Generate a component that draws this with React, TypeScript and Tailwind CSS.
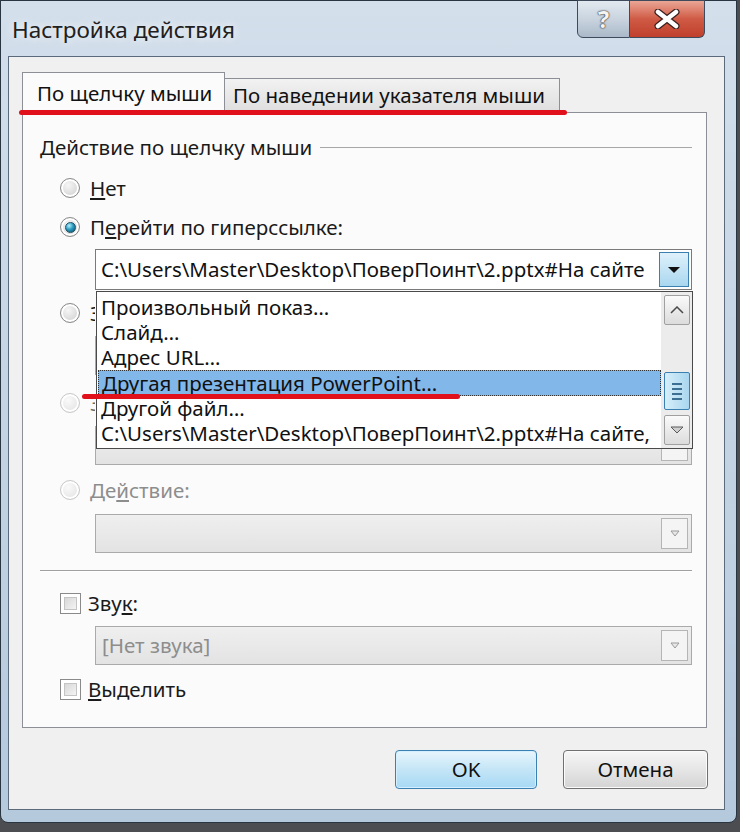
import React from 'react';

const font = { fontFamily: '"Noto Sans", "Open Sans", sans-serif' };

const Radio: React.FC<{ checked?: boolean; disabled?: boolean }> = ({ checked, disabled }) => (
  <span
    className={`w-[20px] h-[20px] shrink-0 rounded-full border flex items-center justify-center shadow-[inset_0_0_0_2px_#ffffff] ${
      disabled
        ? 'border-[#c9c9c9] bg-[radial-gradient(circle_at_40%_35%,#fafafa,#dedede)]'
        : 'border-[#8a8a8a] bg-[radial-gradient(circle_at_40%_35%,#f6f6f6,#c8c8c8)]'
    }`}
  >
    {checked && (
      <span className="w-[11px] h-[11px] rounded-full border border-[#1c4f66] bg-[radial-gradient(circle_at_35%_30%,#b7f0ff,#2a9bc0_45%,#0c4a63)]" />
    )}
  </span>
);

const Checkbox: React.FC = () => (
  <span className="w-[21px] h-[21px] shrink-0 border border-[#8a8a8a] bg-white p-[3px]">
    <span className="block w-full h-full bg-gradient-to-br from-[#d8d8d8] to-[#f4f4f4] border border-[#c4c4c4]" />
  </span>
);

const DisabledCombo: React.FC<{ text?: string }> = ({ text }) => (
  <div className="ml-[72px] w-[597px] h-[39px] border border-[#aaaaaa] bg-gradient-to-b from-[#efefef] to-[#e3e3e3] flex items-center justify-between pl-[6px] pr-[3px]">
    <span className="text-[20.5px] text-[#8d8d8d] whitespace-nowrap">{text}</span>
    <span className="w-[27px] h-[31px] border border-[#b5b5b5] bg-[#f4f4f4] flex items-center justify-center">
      <svg width="10" height="7" viewBox="0 0 10 7">
        <path d="M1 1 L9 1 L5 6 Z" fill="#e8e8e8" stroke="#9a9a9a" strokeWidth="1" />
      </svg>
    </span>
  </div>
);

const listItems = [
  'Произвольный показ…',
  'Слайд…',
  'Адрес URL…',
  'Другая презентация PowerPoint…',
  'Другой файл…',
  'C:\\Users\\Master\\Desktop\\ПоверПоинт\\2.pptx#На сайте,',
];

const ScrollBtn: React.FC<{ up?: boolean }> = ({ up }) => (
  <div className="h-[30px] w-[26px] mx-auto border border-[#a0a0a0] rounded-[2px] bg-gradient-to-b from-[#fafafa] to-[#dcdcdc] flex items-center justify-center">
    <svg width="14" height="8" viewBox="0 0 14 8">
      {up ? (
        <path d="M1 7 L7 1 L13 7" fill="none" stroke="#4a4a4a" strokeWidth="1.5" />
      ) : (
        <path d="M1 1 L13 1 L7 7 Z" fill="#cfcfcf" stroke="#5a5a5a" strokeWidth="1" />
      )}
    </svg>
  </div>
);

const DropList: React.FC = () => (
  <div className="absolute left-0 top-[41px] w-[597px] h-[158px] border border-[#4a4a4a] bg-white flex z-10">
    <div className="flex-1 overflow-hidden pt-[3px] pl-[1px]">
      {listItems.map((t, i) => (
        <div
          key={t}
          className={`h-[25px] flex items-center pl-[3px] whitespace-nowrap text-[20.5px] text-[#111] ${
            i === 3 ? 'bg-[#82b7ea] border border-dotted border-[#333] h-[26px]' : ''
          }`}
        >
          {t}
        </div>
      ))}
    </div>
    <div className="w-[31px] bg-[#ececec] flex flex-col pt-[3px]">
      <ScrollBtn up />
      <div className="h-[47px]" />
      <div className="h-[38px] w-[26px] mx-auto border border-[#3c7fb1] rounded-[2px] bg-gradient-to-r from-[#d6eefa] to-[#a9d6ef] flex flex-col items-center justify-center gap-[3px]">
        <span className="w-[10px] h-[2px] bg-[#3d6f93]" />
        <span className="w-[10px] h-[2px] bg-[#3d6f93]" />
        <span className="w-[10px] h-[2px] bg-[#3d6f93]" />
        <span className="w-[10px] h-[2px] bg-[#3d6f93]" />
      </div>
      <div className="h-[5px]" />
      <ScrollBtn />
    </div>
  </div>
);

const Row: React.FC<{ mt: string; children: React.ReactNode }> = ({ mt, children }) => (
  <div className={`${mt} h-[30px] pl-[37px] flex items-center gap-[10px]`}>{children}</div>
);

export default function App() {
  return (
    <div className="relative w-[740px] h-[832px] bg-[#4b4d50] overflow-hidden text-[#1a1a1a]" style={font}>
      <div className="w-[737px] h-[823px] rounded-b-[8px] border border-[#2a3542] bg-gradient-to-b from-[#d3dfeb] via-[#c4d4e4] to-[#b5c9dd] flex flex-col">
        {/* title bar */}
        <div className="h-[55px] flex items-start justify-between">
          <div className="pl-[11px] pt-[12px] text-[22.5px] text-[#202020] [text-shadow:0_0_8px_#ffffff]">
            Настройка действия
          </div>
          <div className="flex mr-[31px] -mt-px">
            <div className="w-[53px] h-[38px] border border-[#3d4b5c] rounded-bl-[6px] bg-gradient-to-b from-[#e2e9f0] via-[#c9d4df] to-[#aab9c8] flex items-center justify-center text-[24px] font-bold text-[#f4f4f4] [text-shadow:0_0_2px_#222,0_0_1px_#222]">
              ?
            </div>
            <div className="w-[75px] h-[38px] border border-l-0 border-[#3d4b5c] rounded-br-[6px] bg-gradient-to-b from-[#e9a595] via-[#cf5a45] to-[#c0402c] flex items-center justify-center">
              <svg width="26" height="20" viewBox="0 0 26 20">
                <path d="M4 3 L22 17 M22 3 L4 17" stroke="#3a2020" strokeWidth="7" strokeLinecap="round" />
                <path d="M4 3 L22 17 M22 3 L4 17" stroke="#ffffff" strokeWidth="4.5" strokeLinecap="round" />
              </svg>
            </div>
          </div>
        </div>

        {/* client area */}
        <div className="ml-[7px] w-[717px] h-[754px] border border-[#5c6b7c] bg-[#f0f0f0] pl-[13px] pt-[15px]">
          {/* tabs */}
          <div className="flex items-end h-[40px]">
            <div className="relative z-10 w-[203px] h-[41px] -mb-px border border-b-0 border-[#8c8f96] bg-[#fbfbfb] pl-[14px] flex items-center text-[20.5px] text-[#111] whitespace-nowrap">
              По щелчку мыши
            </div>
            <div className="w-[336px] h-[34px] -ml-px border border-b-0 border-[#8c8f96] bg-gradient-to-b from-[#f2f2f2] to-[#dedede] pl-[8px] flex items-center text-[20.5px] text-[#111] whitespace-nowrap">
              По наведении указателя мыши
            </div>
          </div>

          {/* panel */}
          <div className="w-[685px] h-[616px] border border-[#8c8f96] bg-[#fbfbfb] pt-[19px]">
            <div className="h-[30px] pl-[17px] pr-[14px] flex items-center gap-[8px]">
              <span className="text-[20.5px] whitespace-nowrap">Действие по щелчку мыши</span>
              <span className="flex-1 h-px bg-[#a8a8a8]" />
            </div>

            <Row mt="mt-[11px]">
              <Radio />
              <span className="text-[20.5px]"><u>Н</u>ет</span>
            </Row>
            <Row mt="mt-[9px]">
              <Radio checked />
              <span className="text-[20.5px]">П<u>е</u>рейти по гиперссылке:</span>
            </Row>

            <div className="relative mt-[7px] ml-[72px] w-[597px] h-[41px] border border-[#7a7a7a] bg-white flex items-center justify-between pl-[5px] pr-[2px]">
              <span className="text-[20.5px] whitespace-nowrap overflow-hidden text-[#111]">
                C:\Users\Master\Desktop\ПоверПоинт\2.pptx#На сайте
              </span>
              <span className="shrink-0 w-[30px] h-[35px] border border-[#3c7fb1] bg-gradient-to-b from-[#dff1fb] to-[#a9d7ef] flex items-center justify-center">
                <svg width="14" height="8" viewBox="0 0 14 8">
                  <path d="M1 1 L13 1 L7 7 Z" fill="#111" />
                </svg>
              </span>
              <DropList />
            </div>

            <Row mt="mt-[8px]">
              <Radio />
              <span className="w-[5px] overflow-hidden text-[20.5px] whitespace-nowrap">З</span>
            </Row>
            <div className="mt-[8px]">
              <DisabledCombo />
            </div>
            <Row mt="mt-[13px]">
              <Radio disabled />
              <span className="w-[5px] overflow-hidden text-[20.5px] text-[#6d6d6d] whitespace-nowrap">З</span>
            </Row>
            <div className="mt-[8px]">
              <DisabledCombo />
            </div>
            <Row mt="mt-[10px]">
              <Radio disabled />
              <span className="text-[20.5px] text-[#8d8d8d]">Де<u>й</u>ствие:</span>
            </Row>
            <div className="mt-[9px]">
              <DisabledCombo />
            </div>

            <div className="mt-[17px] ml-[17px] w-[652px] h-[2px] bg-[#a0a0a0] border-b border-white" />

            <Row mt="mt-[16px]">
              <Checkbox />
              <span className="text-[20.5px] -ml-[3px]">Зву<u>к</u>:</span>
            </Row>
            <div className="mt-[8px]">
              <DisabledCombo text="[Нет звука]" />
            </div>
            <Row mt="mt-[9px]">
              <Checkbox />
              <span className="text-[20.5px] -ml-[3px]"><u>В</u>ыделить</span>
            </Row>
          </div>

          {/* buttons */}
          <div className="mt-[22px] flex justify-end gap-[26px] pr-[16px]">
            <button className="w-[142px] h-[39px] rounded-[4px] border border-[#3c7fb1] bg-gradient-to-b from-[#e8f6fd] via-[#c4e5f6] to-[#a7d9f5] shadow-[inset_0_0_0_1px_#d4f0ff] text-[20.5px] text-[#111]">
              OK
            </button>
            <button className="w-[145px] h-[39px] rounded-[4px] border border-[#707070] bg-gradient-to-b from-[#f6f6f6] via-[#e6e6e6] to-[#d4d4d4] shadow-[inset_0_0_0_1px_#fbfbfb] text-[20.5px] text-[#111]">
              Отмена
            </button>
          </div>
        </div>
      </div>

      {/* red annotation lines */}
      <div className="absolute z-30 left-[19px] top-[110px] w-[548px] h-[5px] rounded-full bg-[#e0111b]" />
      <div className="absolute z-30 left-[82px] top-[394px] w-[378px] h-[5px] rounded-full bg-[#e0111b]" />
    </div>
  );
}
